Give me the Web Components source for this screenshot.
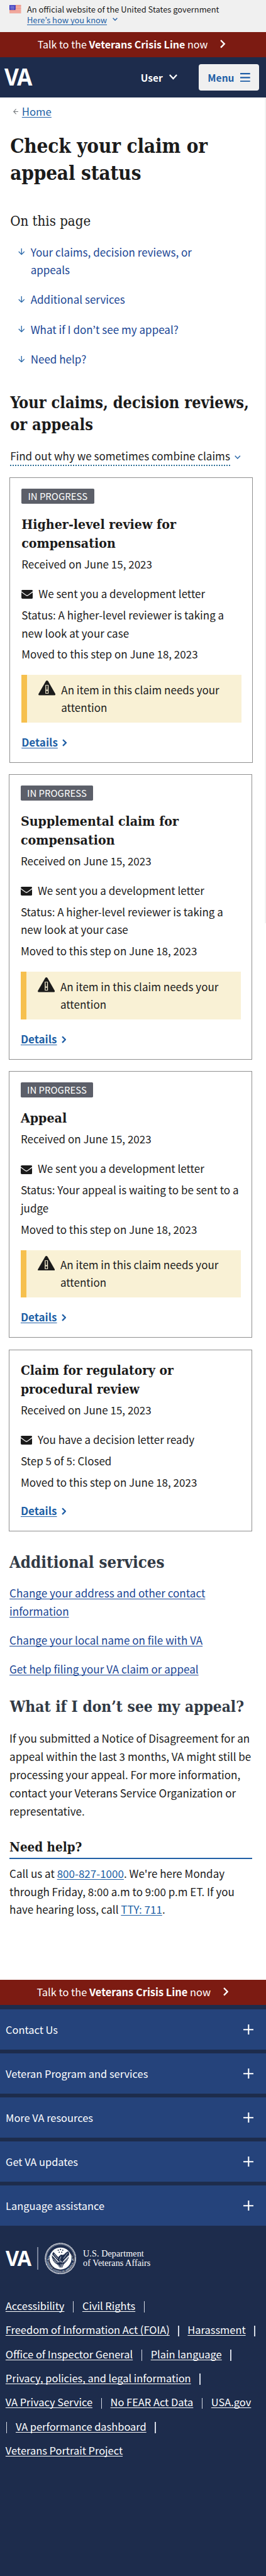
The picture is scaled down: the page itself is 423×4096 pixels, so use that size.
<!DOCTYPE html>
<html lang="en">
<head>
<meta charset="utf-8">
<title>Check your claim or appeal status</title>
<style>
html{font-size:8.065px}
body{margin:0;background:#fff;color:#1b1b1b;font-family:"Noto Sans CJK KR","Noto Sans",sans-serif}
</style>
</head>
<body>
<va-page></va-page>
<script>
// "u" is the design unit: ten units make one rem.
const css = (s, ...v) => String.raw(s, ...v).replace(/(-?\d*\.?\d+)u\b/g, (m, n) => (n / 10).toFixed(4) + 'rem');
const base = css`
:host,*{box-sizing:border-box}
h1,h2,h3,p,button{margin:0;padding:0}
svg{display:block;flex:none}
a{color:inherit;text-decoration:underline;text-decoration-thickness:1px;text-underline-offset:2.2u;text-decoration-skip-ink:none}
.serif{font-family:"DejaVu Serif Condensed","DejaVu Serif",serif;font-weight:700;white-space:nowrap}
`;
const define = (name, style, html) => customElements.define(name, class extends HTMLElement {
  constructor() {
    super();
    const t = document.createElement('template');
    t.innerHTML = `<style>${base}${style}</style>${typeof html === 'function' ? html(this) : html}`;
    this.attachShadow({mode: 'open'}).append(t.content.cloneNode(true));
  }
});
const chevron = (w, h, d, sw) => `<svg class="chev" viewBox="0 0 ${w} ${h}" style="width:${w/10}rem;height:${h/10}rem" fill="none" stroke="currentColor" stroke-width="${sw}"><path d="${d}"/></svg>`;
const logo = (w, h) => `<svg viewBox="0 0 54.5 34" preserveAspectRatio="none" style="width:${w/10}rem;height:${h/10}rem;overflow:visible"><text transform="scale(.92 1)" x="0 27" y="34" fill="#fff" font-family="Open Sans" font-weight="700" font-size="47.6">VA</text></svg>`;

define('va-gov-banner', css`
:host{display:flex;height:63u;background:#f0f0f0;padding:6.9u 0 0 19u;font-size:15.98u;line-height:21.6u;white-space:nowrap}
svg.flag{width:23u;height:16u;margin:3.4u 11.3u 0 0}
.row{display:flex;align-items:center;color:#205fa6}
.chev{margin-left:10.5u;margin-top:-1u}
`, `<svg class="flag" viewBox="0 0 23 16"><path fill="#fff" d="M0 0h23v16H0z"/><path stroke="#e2543f" stroke-width="1.25" d="M0 .7h23M0 3.1h23M0 5.5h23M0 7.9h23M0 10.3h23M0 12.7h23M0 15.2h23"/><path fill="#2b2bbb" d="M0 0h12v9.6H0z"/><path stroke="#fff" stroke-width="1.1" stroke-dasharray="1.2 1.2" d="M1.5 2h9.5M2.7 3.9h7.5M1.5 5.8h9.5M2.7 7.7h7.5"/></svg>
<div><div>An official website of the United States government</div><div class="row"><a>Here’s how you know</a>${chevron(10,7,'M.8.9 5 5.2 9.2.9',1.7)}</div></div>`);

define('va-crisis-line', css`
:host{display:flex;height:50.3u;background:#7c1b12;color:#fff;align-items:center;padding:0 0 1.6u 74u;font-size:19.92u;white-space:nowrap}
:host([wide]){padding-left:72.4u;font-size:20.36u}
b{font-weight:700}
.chev{margin-left:25u;margin-top:-1u}
`, `<span>Talk to the <b>Veterans Crisis Line</b> now</span>${chevron(10,17,'M1.3 1.3 8.4 8.5 1.3 15.7',2.9)}`);

define('va-header', css`
:host{display:flex;height:78.5u;background:#1d2c4c;color:#fff;align-items:center;padding:0 14.2u 0 8.5u;font-weight:700;font-size:19.3u}
.user{margin-left:auto;display:flex;align-items:center;margin-right:42u}
.user .chev{margin-left:12.5u;margin-top:-1u}
button{display:flex;align-items:center;width:119u;height:51u;border:0;border-radius:5u;background:#f0f0f0;color:#205fa6;font:inherit;padding-left:18.3u}
button svg{width:19.5u;height:18u;margin-left:12u;margin-top:-.5u}
`, `${logo(54.5,34)}<div class="user"><span>User</span>${chevron(16,11,'M1 1.3 8 8.8 15 1.3',2.8)}</div>
<button><span>Menu</span><svg viewBox="0 0 19.5 18" stroke="currentColor" stroke-width="2.8"><path d="M0 1.5h19.5M0 9h19.5M0 16.5h19.5"/></svg></button>`);

define('va-breadcrumb', css`
:host{display:flex;align-items:center;padding:15u 0 0 25.5u;height:42u;font-size:20.75u;line-height:27u;color:#205fa6}
svg{width:11u;height:11u;margin-right:6.7u;margin-top:.5u}
a{text-underline-offset:2.6u}
`, `<svg viewBox="0 0 11 11" fill="none" stroke="#71767a" stroke-width="1.3"><path d="M11 5.5H1M5.7.6.9 5.5l4.8 4.9"/></svg><a><slot></slot></a>`);

define('va-jump-links', css`
:host{display:block;padding-left:36u;font-size:21.15u;line-height:34.7u;color:#1a4695;white-space:nowrap}
div{display:flex;margin-bottom:24.2u}
div:last-child{margin-bottom:0}
svg{width:13u;height:13u;margin:10.8u 11.3u 0 0;color:#2766a8}
`, ['Your claims, decision reviews, or<br>appeals','Additional services','What if I don’t see my appeal?','Need help?'].map(t => `<div><svg viewBox="0 0 13 13" fill="none" stroke="currentColor" stroke-width="1.6"><path d="M6.5 0v12M.9 6.3l5.6 5.6 5.6-5.6"/></svg><span>${t}</span></div>`).join(''));

define('va-expander', css`
:host{display:flex;margin:22.5u 0 0 20u;font-size:21.15u;line-height:34.7u;white-space:nowrap}
span{border-bottom:2px dotted #2d6f98}
.chev{margin:15.5u 0 0 9u;color:#2766a8}
`, `<span><slot></slot></span>${chevron(12,8,'M.9 1 6 6.2 11.1 1',1.8)}`);

define('va-claim-card', css`
:host{display:block;border:1px solid #8f8f8f;margin:0 27.4u 22.2u 17.6u;width:479.2u;height:563u;padding:21.4u 0 0 22u;font-size:21.12u;line-height:35.2u;white-space:nowrap}
:host([first]){margin-left:19.2u}
:host([short]){height:526u;margin-bottom:23u}
:host([closed]){height:359.3u;margin-bottom:0}
.tag{width:143u;height:29.2u;border-radius:2.2u;background:#5c5f69;color:#fff;font-size:18.53u;line-height:29.2u;padding-left:12.6u;margin-bottom:22.7u}
h3{font-size:var(--t,26.3u);line-height:36.8u}
.rec{margin-top:5.6u}
.mail{display:flex;margin-top:23.3u}
.mail svg{width:22.5u;height:17.3u;margin:10.3u 11u 0 0}
.status{margin-top:7u}
.moved{margin-top:6.8u}
.alert{display:flex;width:434u;height:94.2u;margin-top:23u;background:#f9f1d5;border-left:9px solid #f6c04e;padding:11.6u 0 0 22.1u}
.alert svg{width:34u;height:29.3u;margin:-.4u 11u 0 0}
.det{display:flex;margin-top:20.9u;font-weight:700;color:#205fa6}
.chev{margin:11.3u 0 0 9u}
`, c => `${c.hasAttribute('closed') ? '' : '<div class="tag">IN PROGRESS</div>'}
<h3 class="serif"><slot name="title"></slot></h3>
<div class="rec">Received on June 15, 2023</div>
<div class="mail"><svg viewBox="0 0 22.5 17.3"><path fill="#1b1b1b" d="M2.2 0h18.1q2.2 0 2.2 2.1v.6l-9.6 7.1q-1.7 1-3.3 0L0 2.7v-.6Q0 0 2.2 0zM0 4.7l9 6.6q2.2 1.5 4.5 0l9-6.6v10.5q0 2.1-2.2 2.1H2.2Q0 17.3 0 15.2z"/></svg><span>${c.getAttribute('letter')}</span></div>
<div class="status"><slot name="status"></slot></div>
<div class="moved">Moved to this step on June 18, 2023</div>
${c.hasAttribute('closed') ? '' : `<div class="alert"><svg viewBox="0 0 34 29.3"><path fill="#1b1b1b" d="M14.8 1.3q2.2-2.6 4.4 0L33.6 26.4q.9 2.5-1.5 2.9H1.9Q-.5 28.9.4 26.4z"/><path fill="#f9f1d5" d="M13.9 8.8h6.2v17.2h-6.2z"/><path fill="#1b1b1b" d="M15.3 10h3.4l-.5 8.4h-2.4zM15.4 20.6h3.2v4.2h-3.2z"/></svg><span>An item in this claim needs your<br>attention</span></div>`}
<div class="det"><a>Details</a>${chevron(9.5,15,'M1.3 1.5 7.3 7.5 1.3 13.5',2.9)}</div>`);

define('va-services', css`
:host{display:block;padding-left:18.7u;font-size:21.2u;line-height:35.5u;color:#1a4695;white-space:nowrap}
div{margin-bottom:21.2u}
`, `<div><a>Change your address and other contact<br>information</a></div><div><a>Change your local name on file with VA</a></div><div><a>Get help filing your VA claim or appeal</a></div>`);

define('va-need-help', css`
:host{display:block;margin:36.5u 26.5u 0 18.7u;width:479u}
h3{font-size:25.4u;line-height:34u;border-bottom:2px solid #205fa6;height:39.4u}
p{margin-top:11.8u;font-size:21.12u;line-height:35.5u;white-space:nowrap}
a{color:#205fa6}
`, `<h3 class="serif">Need help?</h3><p>Call us at <a>800-827-1000</a>. We're here Monday<br>through Friday, 8:00 a.m to 9:00 p.m ET. If you<br>have hearing loss, call <a>TTY: 711</a>.</p>`);

define('va-main', css`
:host{display:block;height:3711.3u;overflow:hidden;background:linear-gradient(#f2f2f2,#f2f2f2) no-repeat right top/2.6u 1628u #fff}
h1{font-size:38.7u;line-height:54.3u;letter-spacing:-.18u;margin:27.5u 0 0 20u}
h2{font-size:31.25u;line-height:43.3u;margin:47.2u 0 0 20u}
h2.toc{font-size:27.4u;line-height:36u;font-weight:400;margin:48u 0 25.5u 20u}
h2.add{font-size:31.9u;color:#323a45;margin:39.5u 0 21.5u 18.5u}
h2.what{font-size:30.2u;color:#323a45;margin:36.3u 0 22.4u 19.5u}
p{font-size:21.15u;line-height:35.7u;margin-left:18.7u;white-space:nowrap}
.cards{margin-top:22.2u}
`, `<va-breadcrumb>Home</va-breadcrumb>
<h1 class="serif">Check your claim or<br>appeal status</h1>
<h2 class="serif toc">On this page</h2>
<va-jump-links></va-jump-links>
<h2 class="serif">Your claims, decision reviews,<br>or appeals</h2>
<va-expander>Find out why we sometimes combine claims</va-expander>
<div class="cards">
<va-claim-card first letter="We sent you a development letter"><span slot="title">Higher-level review for<br>compensation</span><span slot="status">Status: A higher-level reviewer is taking a<br>new look at your case</span></va-claim-card>
<va-claim-card letter="We sent you a development letter"><span slot="title">Supplemental claim for<br>compensation</span><span slot="status">Status: A higher-level reviewer is taking a<br>new look at your case</span></va-claim-card>
<va-claim-card short letter="We sent you a development letter"><span slot="title">Appeal</span><span slot="status">Status: Your appeal is waiting to be sent to a<br>judge</span></va-claim-card>
<va-claim-card closed style="--t:2.58rem" letter="You have a decision letter ready"><span slot="title">Claim for regulatory or<br>procedural review</span><span slot="status">Step 5 of 5: Closed</span></va-claim-card>
</div>
<h2 class="serif add">Additional services</h2>
<va-services></va-services>
<h2 class="serif what">What if I don’t see my appeal?</h2>
<p>If you submitted a Notice of Disagreement for an<br>appeal within the last 3 months, VA might still be<br>processing your appeal. For more information,<br>contact your Veterans Service Organization or<br>representative.</p>
<va-need-help></va-need-help>`);

define('va-footer-panel', css`
:host{display:flex;align-items:center;justify-content:space-between;height:78.3u;margin-top:8.5u;background:#25437b;color:#fff;font-size:20.35u;padding:0 24.2u 0 11.3u}
svg{width:20.6u;height:20.6u}
`, `<span><slot></slot></span><svg viewBox="0 0 20.6 20.6" stroke="#fff" stroke-width="2.6"><path d="M10.3 0v20.6M0 10.3h20.6"/></svg>`);

define('va-seal', css`
:host{display:block;width:62.5u;height:62.5u}
svg{width:100%;height:100%}
`, `<svg viewBox="-31.5 -31.5 63 63" fill="none">
<circle r="30" stroke="#fff" stroke-width="2.4" stroke-dasharray="1.5 .75"/>
<circle r="27.8" stroke="#dfe4ee" stroke-width=".6"/>
<circle r="21.8" fill="#fff"/>
<defs><path id="up" d="M-23.3 4A23.6 23.6 0 0 1 23.3 4"/><path id="lo" d="M-26.6 6A27.3 27.3 0 0 0 26.6 6"/></defs>
<g fill="#e6eaf2" font-family="Liberation Serif" font-weight="700" font-size="4.4"><text><textPath href="#up" textLength="80">DEPARTMENT OF VETERANS AFFAIRS</textPath></text><text><textPath href="#lo" textLength="70">UNITED STATES OF AMERICA</textPath></text></g>
<g fill="#1d2c4c"><circle cy="-18" r="1.3"/><circle cx="-4.5" cy="-16.5" r="1.2"/><circle cx="4.5" cy="-16.5" r="1.2"/><circle cx="-2.5" cy="-12.5" r="1.2"/><circle cx="2.5" cy="-12.5" r="1.2"/>
<path d="M-1-6Q1-9 4-7L7-8Q13-15 16-14 18-10 17-5 16 2 10 8L6 12 4 18H-2L-6 12Q-13 9-16 1-19-7-14-13L-4-2-3-5z"/></g>
<g stroke="#fff" stroke-width=".9"><path d="M-13-9-5 1M-15-5-6 4M-16 0-8 6M-13 5-7 9M14-11 6 0M16-6 7 4M15 0 7 8"/><path stroke-width="1.6" d="M-19-10-4 7M20-8 5 7"/><path d="M-6 8Q0 4 5 9M-4 12-1 18M1 11v7M4 11l-1 7M1-4-2 3 2 6"/></g>
</svg>`);

define('va-footer', css`
:host{display:block;background:#1d2c4c;color:#fff;height:1125.8u;padding-top:.3u}
.brand{display:flex;align-items:center;margin:33.5u 0 38.6u 11.5u;height:62.5u}
.rule{width:1.6u;height:45u;background:#7b869c;margin:0 13u 0 11.5u}
.dept{margin-left:13u;overflow:visible;width:134u;height:37u}
.links{font-size:20.38u;line-height:47.55u;margin-left:11u;white-space:nowrap}
i{display:inline-block;width:1.6u;height:22u;background:#d5dae4;margin:0 16.9u;vertical-align:-5u}
i.lead{margin-left:1.5u}
`, `${['Contact Us','Veteran Program and services','More VA resources','Get VA updates','Language assistance'].map(t => `<va-footer-panel>${t}</va-footer-panel>`).join('')}
<div class="brand">${logo(50.5,30.5)}<div class="rule"></div><va-seal></va-seal>
<svg class="dept" viewBox="0 0 134 37" fill="#fff" font-family="Liberation Serif" font-size="17.6"><text y="15.4" textLength="120">U.S. Department</text><text y="33" textLength="133">of Veterans Affairs</text></svg></div>
<div class="links"><a>Accessibility</a><i></i><a>Civil Rights</a><i></i><br><a>Freedom of Information Act (FOIA)</a><i></i><a>Harassment</a><i></i><br><a>Office of Inspector General</a><i></i><a>Plain language</a><i></i><br><a>Privacy, policies, and legal information</a><i></i><br><a>VA Privacy Service</a><i></i><a>No FEAR Act Data</a><i></i><a>USA.gov</a><br><i class="lead"></i><a>VA performance dashboard</a><i></i><br><a>Veterans Portrait Project</a></div>`);

define('va-page', css`
:host{display:block;width:100%;height:4096px;overflow:hidden;background:#1d2c4c}
`, `<va-gov-banner></va-gov-banner><va-crisis-line></va-crisis-line><va-header></va-header><va-main></va-main><va-crisis-line wide></va-crisis-line><va-footer></va-footer>`);
</script>
</body>
</html>
